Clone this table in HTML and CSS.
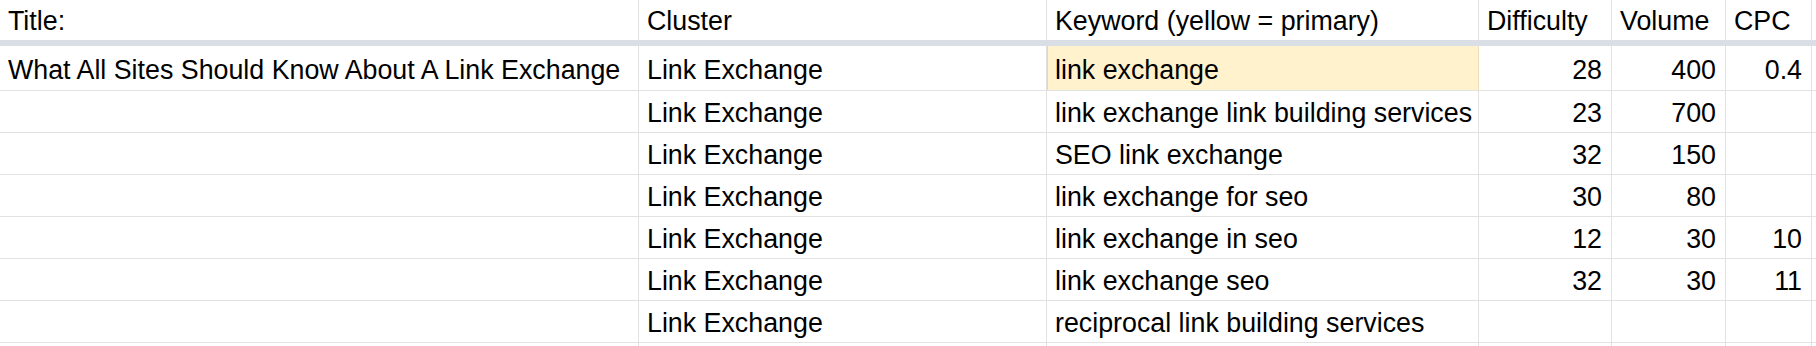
FILE: index.html
```html
<!DOCTYPE html>
<html>
<head>
<meta charset="utf-8">
<link rel="stylesheet" href="styles.css">
</head>
<body>
<div class="sheet">
  <div class="cell head">Title:</div>
  <div class="cell head">Cluster</div>
  <div class="cell head">Keyword (yellow = primary)</div>
  <div class="cell head">Difficulty</div>
  <div class="cell head">Volume</div>
  <div class="cell head">CPC</div>
  <div class="cell head"></div>

  <div class="band"></div>

  <div class="cell first">What All Sites Should Know About A Link Exchange</div>
  <div class="cell first">Link Exchange</div>
  <div class="cell first primary">link exchange</div>
  <div class="cell first num">28</div>
  <div class="cell first num">400</div>
  <div class="cell first num">0.4</div>
  <div class="cell first"></div>

  <div class="cell"></div>
  <div class="cell">Link Exchange</div>
  <div class="cell">link exchange link building services</div>
  <div class="cell num">23</div>
  <div class="cell num">700</div>
  <div class="cell num"></div>
  <div class="cell"></div>

  <div class="cell"></div>
  <div class="cell">Link Exchange</div>
  <div class="cell">SEO link exchange</div>
  <div class="cell num">32</div>
  <div class="cell num">150</div>
  <div class="cell num"></div>
  <div class="cell"></div>

  <div class="cell"></div>
  <div class="cell">Link Exchange</div>
  <div class="cell">link exchange for seo</div>
  <div class="cell num">30</div>
  <div class="cell num">80</div>
  <div class="cell num"></div>
  <div class="cell"></div>

  <div class="cell"></div>
  <div class="cell">Link Exchange</div>
  <div class="cell">link exchange in seo</div>
  <div class="cell num">12</div>
  <div class="cell num">30</div>
  <div class="cell num">10</div>
  <div class="cell"></div>

  <div class="cell"></div>
  <div class="cell">Link Exchange</div>
  <div class="cell">link exchange seo</div>
  <div class="cell num">32</div>
  <div class="cell num">30</div>
  <div class="cell num">11</div>
  <div class="cell"></div>

  <div class="cell"></div>
  <div class="cell">Link Exchange</div>
  <div class="cell">reciprocal link building services</div>
  <div class="cell num"></div>
  <div class="cell num"></div>
  <div class="cell num"></div>
  <div class="cell"></div>

  <div class="cell"></div>
  <div class="cell"></div>
  <div class="cell"></div>
  <div class="cell"></div>
  <div class="cell"></div>
  <div class="cell"></div>
  <div class="cell"></div>
</div>
</body>
</html>
```
FILE: styles.css
```css
html, body {
  margin: 0;
  padding: 0;
  background: #ffffff;
}

body {
  font-family: "Liberation Sans", Arial, sans-serif;
  font-size: 26.8px;
  color: #000000;
  overflow: hidden;
}

.sheet {
  display: grid;
  grid-template-columns: 639px 408px 432px 133px 114px 86px 1fr;
  grid-template-rows: 40px 6px 45px repeat(7, 42px);
  width: 1816px;
}

.cell {
  box-sizing: border-box;
  border-right: 1px solid #e2e2e2;
  border-bottom: 1px solid #e2e2e2;
  padding: 3px 8px 0 8px;
  display: flex;
  align-items: center;
  white-space: nowrap;
  overflow: hidden;
}

.head {
  border-bottom: none;
  padding-top: 3px;
}

.first {
  padding-top: 4px;
}

.band {
  grid-column: 1 / -1;
  background: #dadee5;
}

.num {
  justify-content: flex-end;
  padding-right: 9px;
}

.primary {
  background: #fff2cc;
  box-shadow: inset 1px 0 0 #e9d6a6;
  border-right-color: #ecdfbd;
  padding-left: 8px;
}
```
